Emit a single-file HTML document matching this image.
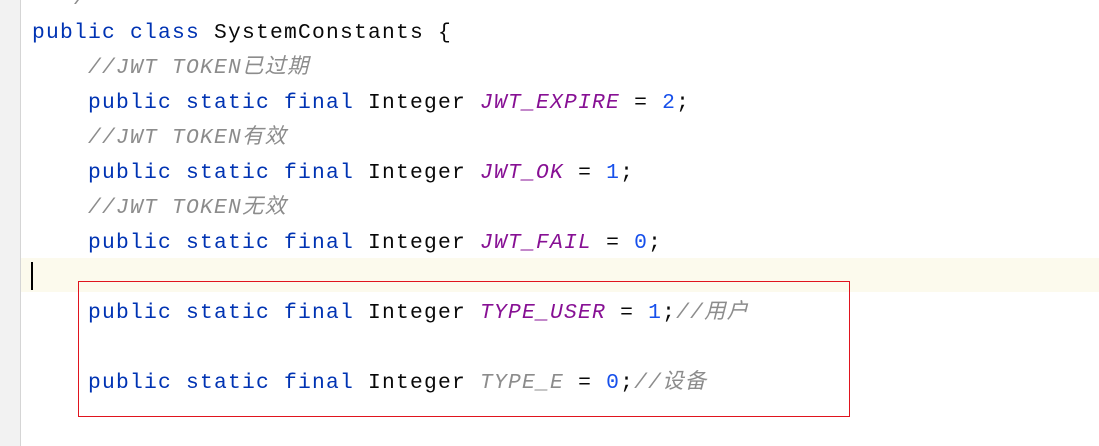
<!DOCTYPE html>
<html><head><meta charset="utf-8"><style>
body{margin:0;width:1099px;height:446px;background:#fff;overflow:hidden;position:relative;font-family:"Liberation Mono","Noto Sans CJK SC",monospace;font-size:21.3px;letter-spacing:1.22px}
.g{position:absolute;left:0;top:0;width:20px;height:446px;background:#f2f2f2;border-right:1px solid #d5d5d5}
.hl{position:absolute;left:21px;top:258px;width:1078px;height:34px;background:#fcfaed}
.cur{position:absolute;left:31px;top:262px;width:2px;height:28px;background:#000}
.box{position:absolute;left:78px;top:281px;width:770px;height:134px;border:1px solid #e0141e}
.l{position:absolute;left:32px;white-space:pre;line-height:35px;color:#080808}
.k{color:#0033b3}.p{color:#871094;font-style:italic}.n{color:#1750eb}.c{color:#8c8c8c;font-style:italic}
</style></head><body>
<div class="g"></div><div class="hl"></div><div class="cur"></div><div class="box"></div>
<div class="l c" style="top:-18px">  */</div>
<div class="l" style="top:16px"><span class="k">public class</span> SystemConstants {</div>
<div class="l c" style="top:51px">    //JWT TOKEN已过期</div>
<div class="l" style="top:86px">    <span class="k">public static final</span> Integer <span class="p">JWT_EXPIRE</span> = <span class="n">2</span>;</div>
<div class="l c" style="top:121px">    //JWT TOKEN有效</div>
<div class="l" style="top:156px">    <span class="k">public static final</span> Integer <span class="p">JWT_OK</span> = <span class="n">1</span>;</div>
<div class="l c" style="top:191px">    //JWT TOKEN无效</div>
<div class="l" style="top:226px">    <span class="k">public static final</span> Integer <span class="p">JWT_FAIL</span> = <span class="n">0</span>;</div>
<div class="l" style="top:296px">    <span class="k">public static final</span> Integer <span class="p">TYPE_USER</span> = <span class="n">1</span>;<span class="c">//用户</span></div>
<div class="l" style="top:366px">    <span class="k">public static final</span> Integer <span class="c">TYPE_E</span> = <span class="n">0</span>;<span class="c">//设备</span></div>
</body></html>
